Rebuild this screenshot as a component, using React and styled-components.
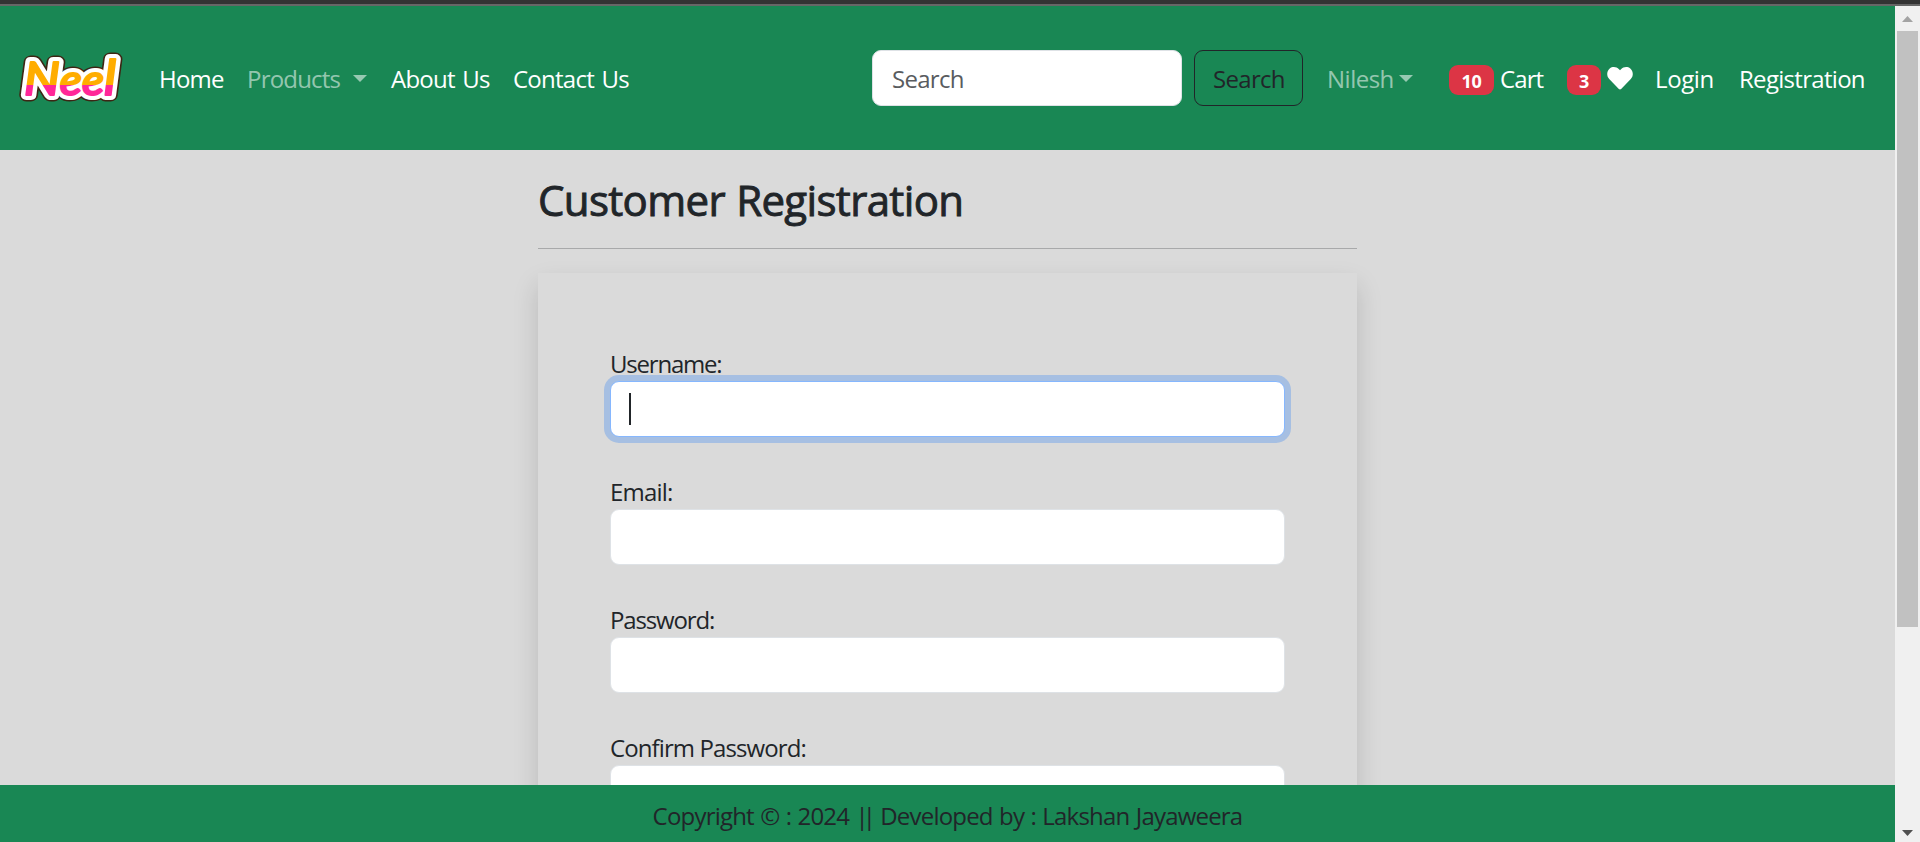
import React from "react";
import styled, { createGlobalStyle, css } from "styled-components";

const Global = createGlobalStyle`
  *, *::before, *::after { box-sizing: border-box; }
  body {
    margin: 0;
    overflow: hidden;
    background: #dadada;
    color: #212529;
    font-family: "Open Sans", "Noto Sans", sans-serif;
    font-size: 24px;
    line-height: 36px;
  }
`;

const Window = styled.div`
  height: 842px;
  display: flex;
  flex-direction: column;
  overflow: hidden;
`;

const TopEdge = styled.div`
  flex: none;
  height: 6px;
  background: #333;
  border-bottom: 2px solid #666;
`;

const Viewport = styled.div`
  flex: 1;
  min-height: 0;
  display: flex;
`;

const Page = styled.div`
  flex: 1;
  min-width: 0;
  display: flex;
  flex-direction: column;
`;

const Label = styled.span`
  display: inline-block;
  white-space: pre;
  letter-spacing: ${(p) => p.$track || 0}px;
  word-spacing: ${(p) => p.$words || 0}px;
`;

const Bars = styled.span`
  letter-spacing: -6px;
  margin-right: 4px;
`;

const Navbar = styled.nav`
  flex: none;
  height: 144px;
  padding: 0 29px 0 18px;
  display: flex;
  align-items: center;
  background: #198754;
`;

const Logo = styled.svg`
  flex: none;
  width: 106px;
  height: 52px;
  margin-right: 35px;
  overflow: visible;
`;

const NavItem = styled.a`
  flex: none;
  width: ${(p) => p.$width}px;
  display: flex;
  align-items: center;
  white-space: nowrap;
  color: ${(p) => (p.$muted ? "rgba(255,255,255,.55)" : "#fff")};
  margin-top: 2px;
`;

const Caret = styled.span`
  margin: -2px 0 0 ${(p) => p.$gap}px;
  border: 7px solid transparent;
  border-top-color: currentColor;
  border-bottom: 0;
`;

const control = css`
  height: 56px;
  border-radius: 9px;
  font: inherit;
  line-height: 36px;
`;

const SearchInput = styled.input`
  ${control}
  width: 310px;
  margin: 0 12px 0 auto;
  padding: 0 18px 0 19px;
  border: 1px solid #dee2e6;
  background: #fff;
  letter-spacing: -0.7px;
  &::placeholder { color: #595c5f; opacity: 1; }
`;

const SearchButton = styled.button`
  ${control}
  width: 109px;
  margin-right: 24px;
  padding: 1px 0 0 1px;
  border: 1px solid #212529;
  background: transparent;
  color: #212529;
`;

const NavForm = styled.form`
  flex: 1;
  display: flex;
  margin-bottom: 0;
`;

const Badge = styled.span`
  width: ${(p) => p.$width}px;
  height: 30px;
  margin-right: 6px;
  border-radius: 9px;
  background: #dc3545;
  font-size: 18px;
  font-weight: 700;
  line-height: 32px;
  letter-spacing: -0.3px;
  text-align: center;
  position: relative;
  top: 1px;
`;

const Heart = styled.svg`
  width: 26px;
  height: 24px;
  margin-top: -3px;
`;

const Main = styled.main`
  flex: 1;
  min-height: 0;
  overflow: hidden;
  display: flex;
  justify-content: center;
`;

const Column = styled.section`
  width: 819px;
  padding-top: 24px;
`;

const Heading = styled.h3`
  margin: 0;
  height: 74px;
  font-size: 42px;
  font-weight: 500;
  line-height: 52px;
  -webkit-text-stroke: 0.9px currentColor;
`;

const Rule = styled.hr`
  margin: 0 0 24px;
  border: 0;
  border-top: 1px solid #a8a9aa;
`;

const Card = styled.form`
  height: 800px;
  padding: 72px;
  box-shadow: 0 12px 24px rgba(0, 0, 0, 0.15);
`;

const Field = styled.label`
  display: block;
  height: 128px;
`;

const FieldName = styled.span`
  display: block;
  height: 36px;
  line-height: 38px;
`;

const FieldBox = styled.span`
  ${control}
  display: flex;
  align-items: center;
  padding: 0 18px;
  background: #fff;
  border: 1px solid ${(p) => (p.$focused ? "#86b7fe" : "#dee2e6")};
  box-shadow: ${(p) => (p.$focused ? "0 0 0 6px rgba(13,110,253,.25)" : "none")};
`;

const TextCursor = styled.span`
  width: 2px;
  height: 32px;
  background: #212529;
`;

const Footer = styled.footer`
  flex: none;
  height: 57px;
  padding-top: 12px;
  background: #198754;
  text-align: center;
  line-height: 38px;
`;

const Scrollbar = styled.div`
  flex: none;
  width: 25px;
  padding: 10px 2px 6px;
  display: flex;
  flex-direction: column;
  align-items: center;
  background: #f0f0f0;
`;

const Thumb = styled.div`
  width: 21px;
  height: 596px;
  margin: 9px 0 auto;
  background: #c1c1c1;
`;

const Arrow = styled.svg`
  width: 11px;
  height: 6px;
  flex: none;
  fill: ${(p) => p.$color};
`;

const fields = [
  { name: "Username:", track: -1.2, focused: true },
  { name: "Email:", track: -0.8 },
  { name: "Password:", track: -1.15 },
  { name: "Confirm Password:", track: -0.9 },
];

function NeelLogo() {
  return (
    <Logo viewBox="0 0 106 52" aria-label="Neel">
      <defs>
        <linearGradient id="split" gradientUnits="userSpaceOnUse" x1="0" y1="0" x2="0" y2="52">
          <stop offset="0.64" stopColor="#ffad00" />
          <stop offset="0.64" stopColor="#ff2798" />
        </linearGradient>
        <text id="wordmark" x="6" y="43" textLength="92" lengthAdjust="spacingAndGlyphs"
          fontFamily="Lato" fontSize="46" fontWeight="500" fontStyle="italic">
          <tspan>N</tspan><tspan fontSize="42">ee</tspan><tspan fontSize="48">l</tspan>
        </text>
      </defs>
      <g strokeLinejoin="round" strokeLinecap="round">
        <use href="#wordmark" fill="#3d2614" stroke="#3d2614" strokeWidth="13" />
        <use href="#wordmark" fill="#fff" stroke="#fff" strokeWidth="10" />
        <use href="#wordmark" fill="url(#split)" stroke="url(#split)" strokeWidth="2" />
      </g>
    </Logo>
  );
}

export default function App() {
  return (
    <Window>
      <Global />
      <TopEdge />
      <Viewport>
        <Page>
          <Navbar>
            <NeelLogo />
            <NavItem $width={88}><Label $track={-0.8}>Home</Label></NavItem>
            <NavItem $width={144} $muted><Label $track={-0.8}>Products</Label><Caret $gap={13} /></NavItem>
            <NavItem $width={122}><Label $track={-0.75} $words={2}>About Us</Label></NavItem>
            <NavItem $width={130}><Label $track={-0.75} $words={2}>Contact Us</Label></NavItem>
            <NavForm>
              <SearchInput placeholder="Search" />
              <SearchButton type="button"><Label $track={-0.7}>Search</Label></SearchButton>
            </NavForm>
            <NavItem $width={122} $muted><Label $track={-0.5}>Nilesh</Label><Caret $gap={5} /></NavItem>
            <NavItem $width={118}><Badge $width={45}>10</Badge><Label $track={-0.9}>Cart</Label></NavItem>
            <NavItem $width={88}>
              <Badge $width={34}>3</Badge>
              <Heart viewBox="0 0 512 480" fill="#fff">
                <path d="M462 50C407 4 326 12 276 64l-20 20-20-20C186 12 105 4 50 50c-63 54-66 150-10 208l193 200c13 13 33 13 46 0l193-200c56-58 53-154-10-208z" />
              </Heart>
            </NavItem>
            <NavItem $width={84}><Label $track={-0.4}>Login</Label></NavItem>
            <NavItem $width={127}><Label $track={-0.7}>Registration</Label></NavItem>
          </Navbar>
          <Main>
            <Column>
              <Heading><Label $track={-0.65} $words={1}>Customer Registration</Label></Heading>
              <Rule />
              <Card>
                {fields.map((f) => (
                  <Field key={f.name}>
                    <FieldName><Label $track={f.track}>{f.name}</Label></FieldName>
                    <FieldBox $focused={f.focused}>{f.focused && <TextCursor />}</FieldBox>
                  </Field>
                ))}
              </Card>
            </Column>
          </Main>
          <Footer>
            <Label $track={-0.8} $words={0.9}>Copyright © : 2024 <Bars>||</Bars> Developed by : Lakshan Jayaweera</Label>
          </Footer>
        </Page>
        <Scrollbar>
          <Arrow viewBox="0 0 11 6" $color="#a3a3a3"><path d="M0 6 5.500 0 11 6z" /></Arrow>
          <Thumb />
          <Arrow viewBox="0 0 11 6" $color="#505050"><path d="M0 0h11L5.500 6z" /></Arrow>
        </Scrollbar>
      </Viewport>
    </Window>
  );
}
